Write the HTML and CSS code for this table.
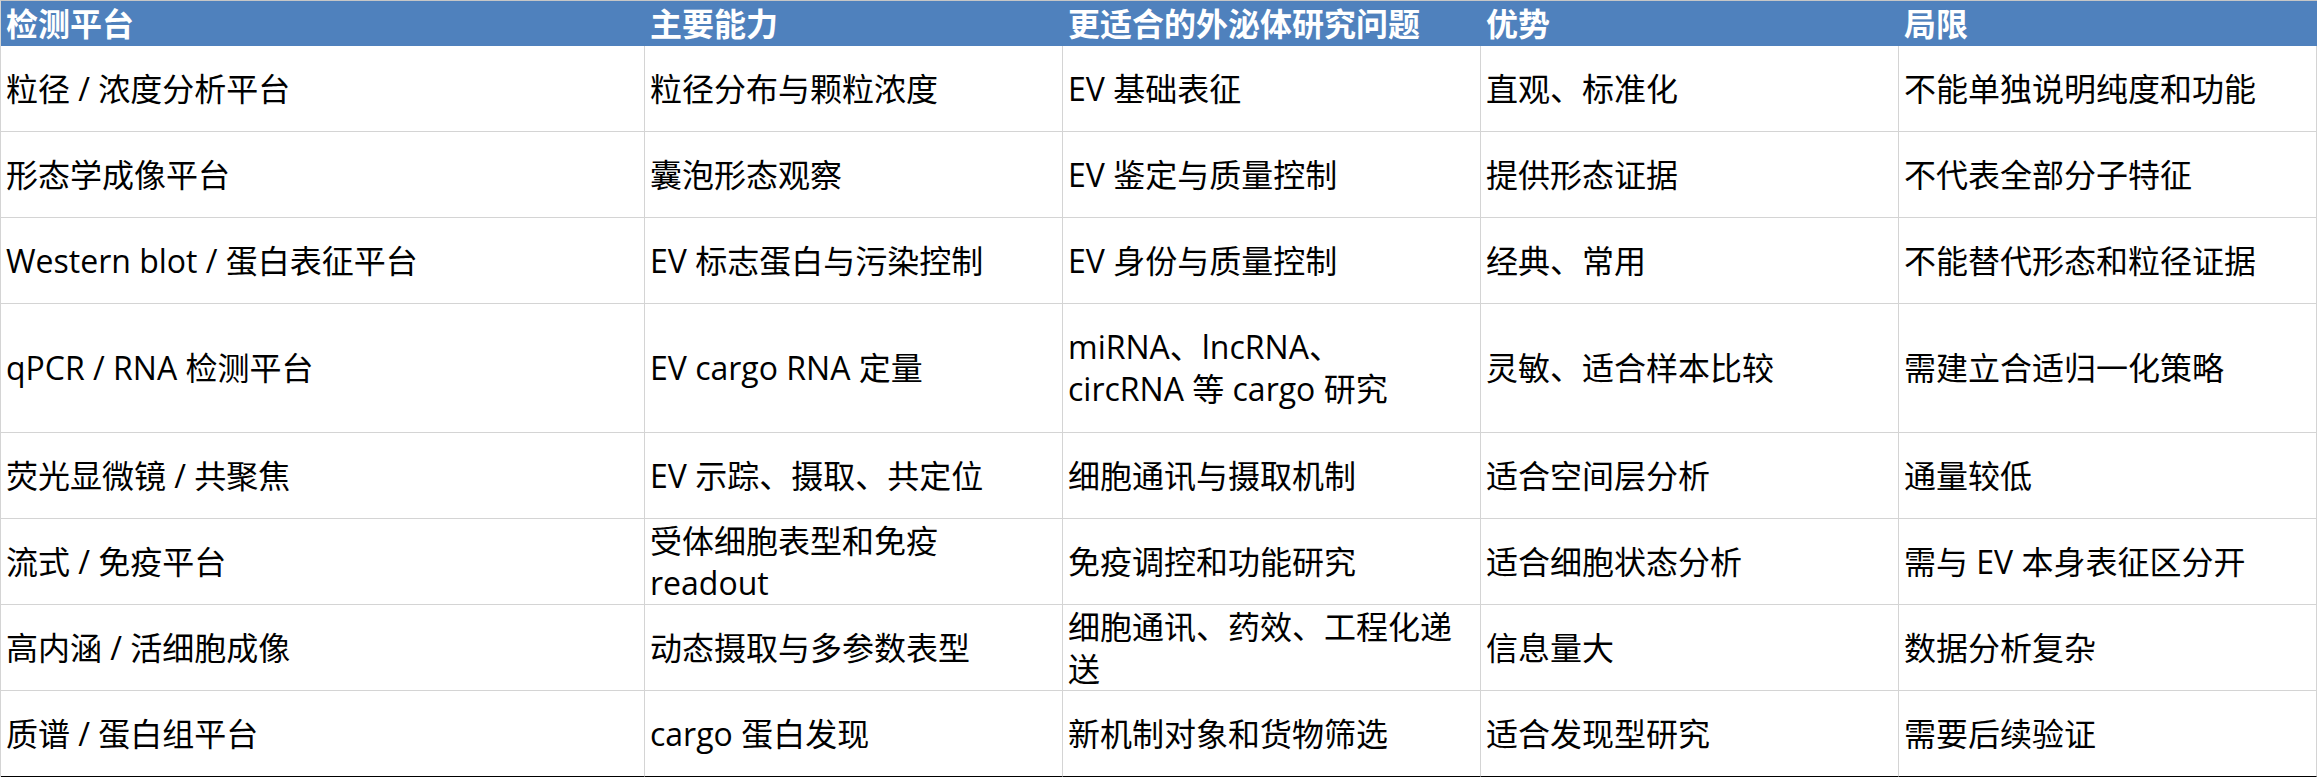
FILE: index.html
```html
<!DOCTYPE html>
<html lang="zh-CN">
<head>
<meta charset="utf-8">
<title>检测平台对比</title>
<link rel="stylesheet" href="styles.css">
</head>
<body>
<div class="sheet">
  <div class="row head">
    <div class="cell">检测平台</div>
    <div class="cell">主要能力</div>
    <div class="cell">更适合的外泌体研究问题</div>
    <div class="cell">优势</div>
    <div class="cell">局限</div>
  </div>
  <div class="row">
    <div class="cell">粒径 / 浓度分析平台</div>
    <div class="cell">粒径分布与颗粒浓度</div>
    <div class="cell">EV 基础表征</div>
    <div class="cell">直观、标准化</div>
    <div class="cell">不能单独说明纯度和功能</div>
  </div>
  <div class="row">
    <div class="cell">形态学成像平台</div>
    <div class="cell">囊泡形态观察</div>
    <div class="cell">EV 鉴定与质量控制</div>
    <div class="cell">提供形态证据</div>
    <div class="cell">不代表全部分子特征</div>
  </div>
  <div class="row">
    <div class="cell">Western blot / 蛋白表征平台</div>
    <div class="cell">EV 标志蛋白与污染控制</div>
    <div class="cell">EV 身份与质量控制</div>
    <div class="cell">经典、常用</div>
    <div class="cell">不能替代形态和粒径证据</div>
  </div>
  <div class="row tall">
    <div class="cell">qPCR / RNA 检测平台</div>
    <div class="cell">EV cargo RNA 定量</div>
    <div class="cell">miRNA、lncRNA、<br>circRNA 等 cargo 研究</div>
    <div class="cell">灵敏、适合样本比较</div>
    <div class="cell">需建立合适归一化策略</div>
  </div>
  <div class="row">
    <div class="cell">荧光显微镜 / 共聚焦</div>
    <div class="cell">EV 示踪、摄取、共定位</div>
    <div class="cell">细胞通讯与摄取机制</div>
    <div class="cell">适合空间层分析</div>
    <div class="cell">通量较低</div>
  </div>
  <div class="row">
    <div class="cell">流式 / 免疫平台</div>
    <div class="cell">受体细胞表型和免疫<br>readout</div>
    <div class="cell">免疫调控和功能研究</div>
    <div class="cell">适合细胞状态分析</div>
    <div class="cell">需与 EV 本身表征区分开</div>
  </div>
  <div class="row">
    <div class="cell">高内涵 / 活细胞成像</div>
    <div class="cell">动态摄取与多参数表型</div>
    <div class="cell">细胞通讯、药效、工程化递<br>送</div>
    <div class="cell">信息量大</div>
    <div class="cell">数据分析复杂</div>
  </div>
  <div class="row last">
    <div class="cell">质谱 / 蛋白组平台</div>
    <div class="cell">cargo 蛋白发现</div>
    <div class="cell">新机制对象和货物筛选</div>
    <div class="cell">适合发现型研究</div>
    <div class="cell">需要后续验证</div>
  </div>
</div>
</body>
</html>
```

FILE: styles.css
```css
html, body {
  margin: 0;
  padding: 0;
  background: #ffffff;
}

.sheet {
  width: 2317px;
  box-sizing: border-box;
  border-top: 1px solid #c6c6c6;
  border-left: 1px solid #d4d4d4;
  font-family: "Open Sans", "Noto Sans CJK SC", sans-serif;
  font-size: 32px;
  color: #000000;
}

.row {
  display: grid;
  grid-template-columns: 644px repeat(4, 418px);
  height: 86px;
}

.row.tall {
  height: 129px;
}

.cell {
  box-sizing: border-box;
  display: flex;
  align-items: center;
  padding: 0 5px;
  line-height: 42px;
  border-right: 1px solid #d4d4d4;
  border-bottom: 1px solid #d4d4d4;
  white-space: nowrap;
  overflow: hidden;
}

.row.last .cell {
  border-bottom-color: #000000;
}

.row.head {
  height: 45px;
  background: #4f81bd;
}

.row.head .cell {
  border: none;
  color: #ffffff;
  font-weight: 700;
  line-height: 45px;
}
```
